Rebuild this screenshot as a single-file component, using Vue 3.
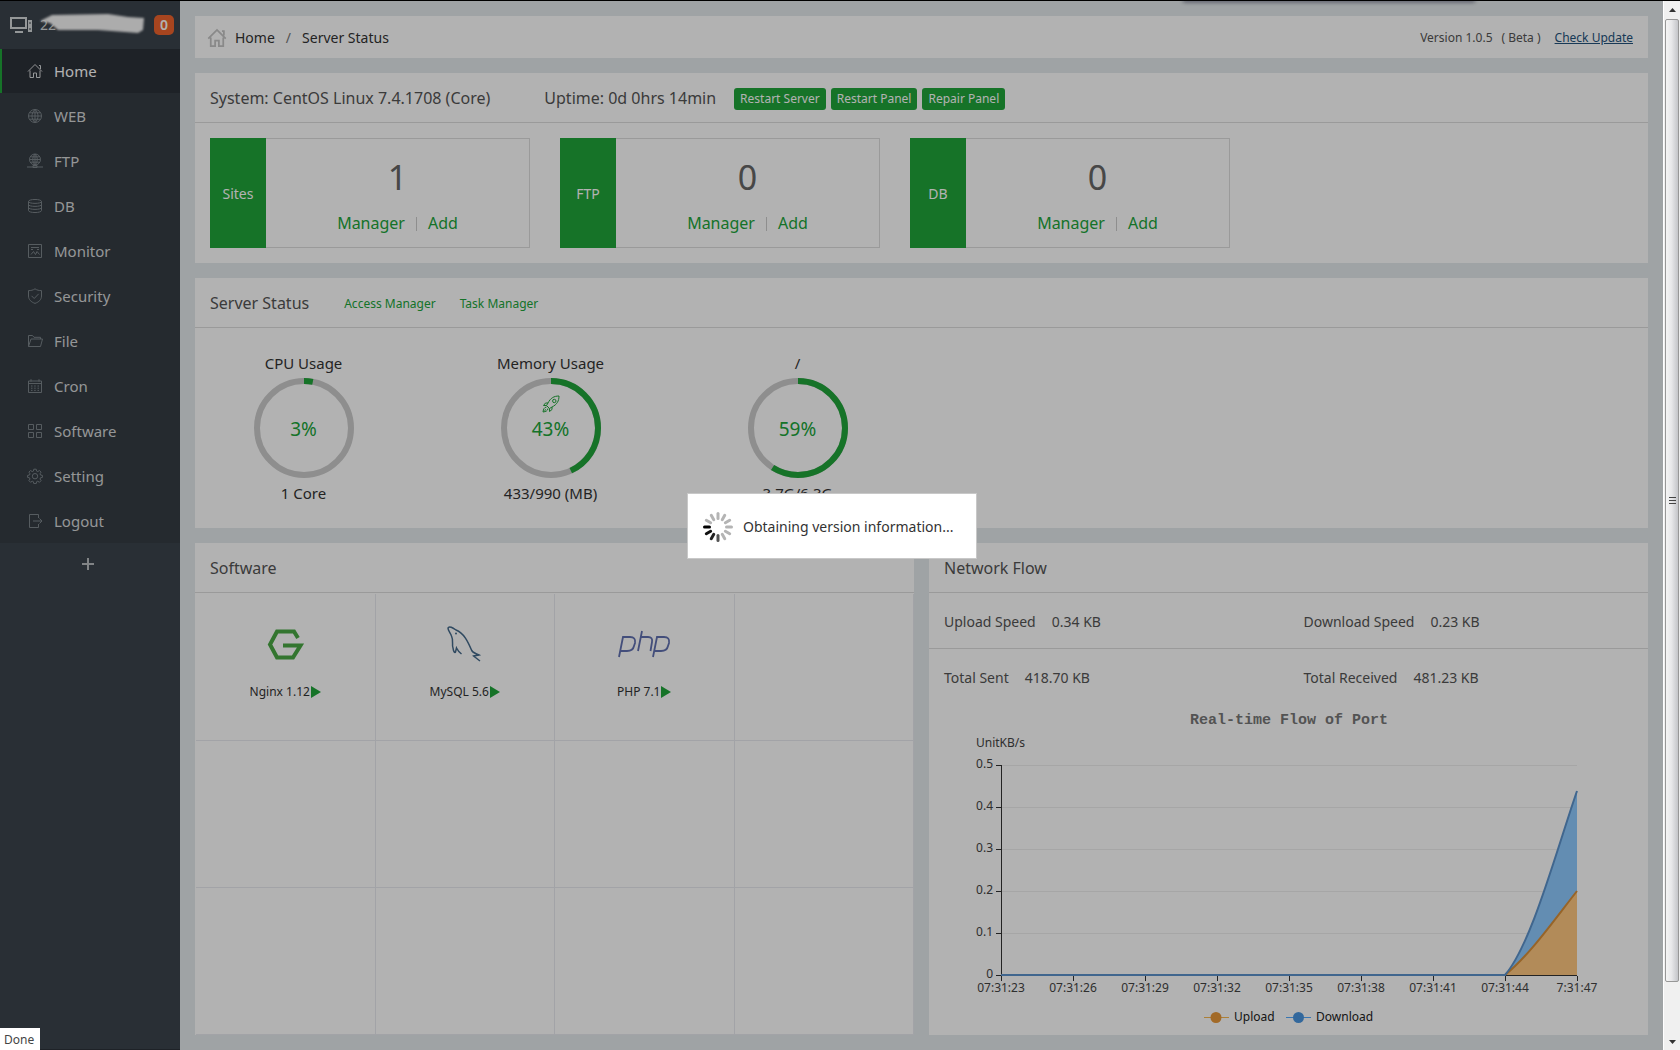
<script setup>
import { computed } from 'vue'

const menu = [
  { label: 'Home', icon: 'home', active: true },
  { label: 'WEB', icon: 'globe' },
  { label: 'FTP', icon: 'ftp' },
  { label: 'DB', icon: 'db' },
  { label: 'Monitor', icon: 'monitor' },
  { label: 'Security', icon: 'shield' },
  { label: 'File', icon: 'folder' },
  { label: 'Cron', icon: 'calendar' },
  { label: 'Software', icon: 'grid' },
  { label: 'Setting', icon: 'gear' },
  { label: 'Logout', icon: 'logout' },
]

const icons = {
  home: 'M1 8.5 8 1.5 15 8.5M12 2.5h1.5V6M3 7.5V14.500h3.500V10h3v4.500H13V7.500',
  globe: 'M8 1.500a6.500 6.500 0 1 0 0 13a6.500 6.500 0 1 0 0-13M8 1.500v13M1.500 8h13M2.500 4.800h11M2.500 11.200h11M8 1.500C4 5 4 11 8 14.500M8 1.500C12 5 12 11 8 14.500',
  ftp: 'M8 1a5.500 5.500 0 1 0 0 11a5.500 5.500 0 1 0 0-11M8 1v11M2.500 6.500h11M3.500 3.800h9M3.500 9.200h9M8 1C5 4 5 9 8 12M8 1C11 4 11 9 8 12M0 14h16M6 12.500h4v2H6z',
  db: 'M1.500 3.500C1.500 .8 14.500 .8 14.500 3.500C14.500 6 1.500 6 1.500 3.500V12.500C1.500 15.200 14.500 15.200 14.500 12.500V3.500M1.500 6.500C1.500 9 14.500 9 14.500 6.500M1.500 9.500C1.500 12 14.500 12 14.500 9.500',
  monitor: 'M1.500 1.500h13v13h-13zM4 4.500h8M4 6.500h2M10 6.500h2M4 11.500l2.500-3 2 3 1.500-3 2.500 3',
  shield: 'M8 .8C10 2.200 12 2.600 14.500 2.600V8C14.500 11.500 12 14 8 15.400C4 14 1.500 11.500 1.500 8V2.600C4 2.600 6 2.200 8 .8ZM4.500 7.800l2.700 2.700 4.500-4.700',
  folder: 'M1.500 13.500V2.500h4l1.500 1.800h6.500V6M1.500 13.500L4 6h11.500l-2 7.500z',
  calendar: 'M1.500 3h13v11.500h-13zM1.500 5.500h13M4 1.200v2.500M12 1.200v2.500M4 8h1.500M7.200 8h1.500M10.500 8H12M4 10.200h1.500M7.200 10.200h1.500M10.500 10.200H12M4 12.400h1.500M7.200 12.400h1.500M10.500 12.400H12',
  grid: 'M1.500 1.500h5v5h-5zM9.500 1.500h5v5h-5zM1.500 9.500h5v5h-5zM9.500 9.500h5v5h-5z',
  gear: 'M6.800 1.200h2.400l.4 1.900 1.200.5 1.600-1.100 1.700 1.700-1.100 1.600.5 1.200 1.900.4v2.000l-1.900.4-.5 1.200 1.100 1.600-1.700 1.700-1.600-1.100-1.200.5-.4 1.900H6.800l-.4-1.900-1.200-.5-1.600 1.100-1.700-1.700 1.100-1.600-.5-1.200-1.900-.4V7.400l1.900-.4.500-1.200-1.100-1.600 1.700-1.700 1.600 1.100 1.200-.5zM8 5.500a2.700 2.700 0 1 0 0 5.400a2.700 2.700 0 1 0 0-5.400',
  logout: 'M11.500 5V1.500h-9v13h9V11M6 8h9M12.500 5.500 15 8l-2.500 2.500',
}

const cards = [
  { name: 'Sites', count: 1 },
  { name: 'FTP', count: 0 },
  { name: 'DB', count: 0 },
]

const gauges = [
  { title: 'CPU Usage', percent: 3, note: '1 Core' },
  { title: 'Memory Usage', percent: 43, note: '433/990 (MB)', rocket: true },
  { title: '/', percent: 59, note: '3.7G/6.3G' },
]
const circumference = 2 * Math.PI * 47
const dash = (p) => `${(circumference * p) / 100} ${circumference}`

const software = [
  { name: 'Nginx 1.12', logo: 'nginx' },
  { name: 'MySQL 5.6', logo: 'mysql' },
  { name: 'PHP 7.1', logo: 'php' },
]
const cells = computed(() => Array.from({ length: 12 }, (_, i) => software[i] || null))

const flow = [
  [['Upload Speed', '0.34 KB'], ['Download Speed', '0.23 KB']],
  [['Total Sent', '418.70 KB'], ['Total Received', '481.23 KB']],
]

const yTicks = ['0.5', '0.4', '0.3', '0.2', '0.1', '0'].map((label, i) => ({ label, y: 65 + i * 42 }))
const xTicks = ['07:31:23', '07:31:26', '07:31:29', '07:31:32', '07:31:35', '07:31:38', '07:31:41', '07:31:44', '7:31:47']
  .map((label, i) => ({ label, x: 72 + i * 72 }))

const blades = Array.from({ length: 12 }, (_, i) => ({
  angle: i * 30,
  color: { 6: '#555', 7: '#222', 8: '#111', 9: '#000' }[i] || '#b4b4b4',
}))
</script>

<template>
  <div class="page">
    <aside class="sidebar">
      <div class="host">
        <svg class="host-icon" viewBox="0 0 22 16" aria-hidden="true">
          <path d="M1 1h15v10H1zM5 15h8" fill="none" stroke="#d4d8da" stroke-width="2" />
          <path d="M18 3h4v12h-4z" fill="#d4d8da" /><path d="M19 6h2M20 11v2" stroke="#3c444d" />
        </svg>
        <span class="host-name">22
          <svg class="smudge" viewBox="0 0 108 22" aria-hidden="true">
            <path d="M2 8 14 2 70 1 90 4 106 5 105 17 100 20 60 17 20 17 12 10Z" fill="#f6f6f6" />
          </svg>
        </span>
        <span class="badge">0</span>
      </div>
      <nav class="menu">
        <a v-for="m in menu" :key="m.label" href="#" class="menu-item" :class="{ active: m.active }">
          <svg class="menu-icon" viewBox="0 0 16 16" aria-hidden="true"><path :d="icons[m.icon]" /></svg>
          <span>{{ m.label }}</span>
        </a>
      </nav>
      <button class="add" type="button" aria-label="Add menu item">
        <svg viewBox="0 0 14 14" width="14" height="14"><path d="M7 1v12M1 7h12" stroke="#b9bdc0" stroke-width="2" /></svg>
      </button>
    </aside>

    <main class="main">
      <section class="panel crumbs">
        <svg class="crumb-icon" viewBox="0 0 16 16" aria-hidden="true"><path :d="icons.home" /></svg>
        <a href="#">Home</a><span class="slash">/</span><span>Server Status</span>
        <div class="version">
          <span>Version 1.0.5</span><span class="beta">( Beta )</span><a href="#" class="update">Check Update</a>
        </div>
      </section>

      <section class="panel">
        <header class="panel-head">
          <h2 class="system">System: CentOS Linux 7.4.1708 (Core)</h2>
          <h2 class="uptime">Uptime: 0d 0hrs 14min</h2>
          <div class="actions">
            <button type="button">Restart Server</button>
            <button type="button">Restart Panel</button>
            <button type="button">Repair Panel</button>
          </div>
        </header>
        <div class="cards">
          <article v-for="c in cards" :key="c.name" class="card">
            <div class="card-name">{{ c.name }}</div>
            <div class="card-body">
              <strong class="count">{{ c.count }}</strong>
              <div class="links"><a href="#">Manager</a><i></i><a href="#">Add</a></div>
            </div>
          </article>
        </div>
      </section>

      <section class="panel status">
        <header class="panel-head">
          <h2 class="status-title">Server Status</h2>
          <a href="#" class="head-link">Access Manager</a>
          <a href="#" class="head-link">Task Manager</a>
        </header>
        <div class="gauges">
          <div v-for="g in gauges" :key="g.title" class="gauge">
            <h3>{{ g.title }}</h3>
            <div class="ring">
              <svg viewBox="0 0 100 100" width="100" height="100" aria-hidden="true">
                <circle cx="50" cy="50" r="47" stroke="#ccc" />
                <circle cx="50" cy="50" r="47" stroke="#20a53a" :stroke-dasharray="dash(g.percent)" transform="rotate(-90 50 50)" />
              </svg>
              <svg v-if="g.rocket" class="rocket" viewBox="0 0 18 18" aria-hidden="true">
                <path d="M17 1C12 1 8.500 3 6 8L4.500 10.500 7.500 13.500 10 12C15 9.500 17 6 17 1ZM14 6a1.700 1.700 0 1 0-3.400 0a1.700 1.700 0 1 0 3.400 0M6 8H3.500L1.500 10.500 4.500 10.500M10 12v2.500L7.500 16.500V13.500M4.500 12C2 12.500 1.500 14 1 17C4 16.500 5.500 16 6 13.500M4 14.500l-1.500 1" />
              </svg>
              <span class="percent">{{ g.percent }}%</span>
            </div>
            <p>{{ g.note }}</p>
          </div>
        </div>
      </section>

      <div class="columns">
        <section class="panel column">
          <header class="panel-head"><h2>Software</h2></header>
          <div class="cells">
            <div v-for="(s, i) in cells" :key="i" class="cell">
              <template v-if="s">
                <svg v-if="s.logo === 'nginx'" class="logo" viewBox="0 0 54 40" aria-hidden="true">
                  <path d="M40 14 36 7.500H19L12 20.500 19 33.500H35L42.500 21.500H25" fill="none" stroke="#49a844" stroke-width="4" />
                </svg>
                <svg v-else-if="s.logo === 'mysql'" class="logo" viewBox="0 0 54 40" aria-hidden="true">
                  <path d="M42 37 35.500 32C36.500 31.500 39 31.500 41 31C37 29 34 28.500 33.500 26C30 18 26 9 18 6C15 4 11 1.500 10 4C10 7 12.500 9 13.500 12C16 17 13.500 21 15 24C15.500 28 17 29.500 17.500 28L18.500 24C20 27 21 28 23.500 30" fill="none" stroke="#456a8b" stroke-width="1.500" />
                  <circle cx="18" cy="9.500" r="1" fill="#456a8b" />
                </svg>
                <svg v-else class="logo" viewBox="0 0 54 40" aria-hidden="true">
                  <path d="M2 33 6 13H13Q19 13 18 19L17 22Q16 27 10 27H4M21 27 25 7M23.500 13H31Q36 13 35 18L33.500 27M36 33 40 13H47Q53 13 52 19L51 22Q50 27 44 27H38" fill="none" stroke="#6070b0" stroke-width="1.800" />
                </svg>
                <div class="soft-name">{{ s.name }}<i class="play"></i></div>
              </template>
            </div>
          </div>
        </section>

        <section class="panel column">
          <header class="panel-head"><h2>Network Flow</h2></header>
          <div v-for="(row, i) in flow" :key="i" class="flow-row">
            <div v-for="[k, v] in row" :key="k" class="flow-item"><span>{{ k }}</span><span>{{ v }}</span></div>
          </div>
          <svg class="chart" viewBox="0 4 719 331" role="img" aria-label="Real-time Flow of Port">
            <text class="chart-title" x="360" y="24" text-anchor="middle">Real-time Flow of Port</text>
            <text x="47" y="47">UnitKB/s</text>
            <g v-for="t in yTicks" :key="t.label">
              <path :d="`M73 ${t.y}.5H648`" stroke="#eee" />
              <path :d="`M67 ${t.y}.5H72`" stroke="#333" />
              <text x="64" :y="t.y + 3" text-anchor="end">{{ t.label }}</text>
            </g>
            <g v-for="t in xTicks" :key="t.label">
              <path :d="`M${t.x}.5 276v5`" stroke="#333" />
              <text :x="t.x" y="292" text-anchor="middle">{{ t.label }}</text>
            </g>
            <path d="M576 275C602 245 626 155 648 91V275Z" fill="#8ecaff" />
            <path d="M576 275C600 256 626 219 648 191V275Z" fill="#ffc880" />
            <path d="M72.500 65V275.500H648" fill="none" stroke="#333" />
            <path d="M72 275H576C600 256 626 219 648 191" fill="none" stroke="#d8903a" stroke-width="2" />
            <path d="M72 275H576C602 245 626 155 648 91" fill="none" stroke="#5c93cc" stroke-width="2" />
            <path d="M275 317.500h25" stroke="#f7b851" /><circle cx="287" cy="317.500" r="5.500" fill="#e8983a" />
            <text class="legend" x="305" y="321">Upload</text>
            <path d="M357 317.500h25" stroke="#52a9ff" /><circle cx="369.500" cy="317.500" r="5.500" fill="#4a96e0" />
            <text class="legend" x="387" y="321">Download</text>
          </svg>
        </section>
      </div>
    </main>

    <div class="shade"></div>
    <div class="scrollbar" aria-hidden="true">
      <svg width="17" height="18" viewBox="0 0 17 18"><path d="M5 11h7L8.500 7Z" fill="#333" /></svg>
      <div class="thumb"><i></i><i></i><i></i></div>
      <svg width="17" height="18" viewBox="0 0 17 18"><path d="M5 8h7L8.500 12Z" fill="#333" /></svg>
    </div>
    <div class="edge"></div>
    <div class="loading" role="status">
      <svg viewBox="0 0 32 32" width="32" height="32" aria-hidden="true">
        <path v-for="b in blades" :key="b.angle" d="M16 2.500v5" :stroke="b.color" stroke-width="3" stroke-linecap="round" :transform="`rotate(${b.angle} 16 16)`" />
      </svg>
      <span>Obtaining version information...</span>
    </div>
    <div class="done">Done</div>
  </div>
</template>

<style>
body { background: #e4eaec; }
</style>

<style scoped>
* { box-sizing: border-box; margin: 0; }
.page { display: flex; min-height: 100vh; border-top: 1px solid #000; background: #e4eaec; color: #333; font: 14px/20px "Noto Sans", "Open Sans", sans-serif; }
a { color: inherit; text-decoration: none; }
h2 { font-size: 16px; font-weight: 400; color: #555; }
button { font-family: inherit; border: 0; cursor: pointer; }

.sidebar { width: 180px; flex: none; background: #3c444d; border-bottom: 1px solid #2c3138; }
.host { display: flex; align-items: center; height: 48px; padding: 0 6px 0 10px; }
.host-icon { width: 22px; height: 16px; flex: none; }
.host-name { position: relative; flex: 1; padding-left: 8px; color: #d4d8da; font-size: 14px; }
.smudge { position: absolute; left: 6px; top: -2px; width: 108px; height: 22px; filter: blur(1px); }
.badge { width: 20px; height: 20px; border-radius: 5px; background: #f0642d; color: #fff; font-weight: 600; text-align: center; }
.menu { background: #353d44; }
.menu-item { display: flex; align-items: center; height: 45px; padding-left: 25px; border-left: 2px solid transparent; color: #d6d7d9; font-size: 15px; }
.menu-icon { width: 16px; height: 16px; margin-right: 11px; fill: none; stroke: #7c848a; }
.active { height: 44px; background: #2c3138; border-left-color: #20a53a; color: #fff; }
.active .menu-icon { stroke: #d5d8da; }
.add { display: flex; align-items: center; justify-content: center; width: 175px; height: 42px; background: none; }

.main { flex: 1; min-width: 0; display: flex; flex-direction: column; gap: 15px; padding: 15px; margin-right: 17px; }
.panel { background: #fff; }
.crumbs { display: flex; align-items: center; height: 42px; padding: 2px 15px 0 12px; }
.crumb-icon { width: 20px; height: 20px; margin-right: 8px; fill: none; stroke: #c4c4c4; stroke-width: 1.400; }
.slash { margin: 0 11px; color: #777; }
.version { display: flex; margin-left: auto; font-size: 12px; color: #555; }
.beta { margin: 0 14px 0 9px; }
.update { color: #23527c; text-decoration: underline; }

.panel-head { display: flex; align-items: center; height: 50px; padding: 0 15px; border-bottom: 1px solid #ddd; }
.uptime { margin-left: 54px; }
.actions { display: flex; gap: 5px; margin-left: 18px; padding-top: 2px; }
.actions button { height: 22px; padding: 0 6px; border-radius: 3px; background: #20a53a; color: #fff; font-size: 12px; }
.cards { display: flex; gap: 30px; padding: 15px; }
.card { display: flex; width: 320px; height: 110px; border: 1px solid #ddd; border-left: 0; }
.card-name { display: flex; align-items: center; justify-content: center; width: 56px; margin: -1px 0; padding-top: 2px; background: #20a53a; color: #fff; }
.card-body { flex: 1; text-align: center; color: #666; }
.count { display: block; padding-top: 18px; font-size: 34px; line-height: 40px; font-weight: 400; }
.links { display: flex; align-items: center; justify-content: center; padding-top: 16px; font-size: 16px; color: #20a53a; }
.links i { width: 1px; height: 14px; margin: 2px 11px 0; background: #ccc; }

.status-title { margin-right: 35px; }
.head-link { margin-right: 24px; padding-top: 2px; font-size: 12px; color: #20a53a; }
.gauges { display: flex; gap: 60px; height: 200px; padding: 23px 15px 0; }
.gauge { width: 187px; text-align: center; }
.gauge h3 { padding-bottom: 2px; font-size: 15px; line-height: 25px; font-weight: 400; }
.gauge p { font-size: 15px; line-height: 30px; }
.ring { position: relative; display: flex; align-items: center; justify-content: center; height: 100px; }
.ring circle { fill: none; stroke-width: 6; }
.rocket { position: absolute; top: 17px; width: 18px; height: 18px; fill: none; stroke: #20a53a; }
.percent { position: absolute; padding-top: 2px; font-size: 19px; color: #20a53a; line-height: 100px; }

.columns { display: grid; grid-template-columns: 1fr 1fr; gap: 15px; }
.column { min-width: 0; }
.cells { display: grid; grid-template-columns: repeat(4, 1fr); grid-auto-rows: 147px; padding: 1px 0 0 1px; }
.cell { display: flex; flex-direction: column; align-items: center; padding-top: 30px; border-right: 1px solid #e8eaf0; border-bottom: 1px solid #e8eaf0; }
.logo { width: 54px; height: 40px; }
.soft-name { display: flex; align-items: center; margin-top: 18px; font-size: 12px; }
.play { border: 6px solid transparent; border-left: 10px solid #20a53a; border-right: 0; margin-left: 1px; }
.flow-row { display: flex; height: 55px; align-items: center; color: #555; }
.flow-row + .flow-row { height: 56px; border-top: 1px solid #ddd; }
.flow-item { display: flex; gap: 16px; flex: 1; padding: 2px 0 0 15px; }
.chart { display: block; width: 100%; font-size: 12px; }
.chart text { fill: #444; }
.chart .legend { fill: #222; }
.chart .chart-title { font: bold 15px "Liberation Mono", monospace; fill: #777; }

.shade { position: fixed; inset: 1px 17px 0 0; background: rgba(0, 0, 0, .3); }
.edge { position: fixed; top: 0; left: 1184px; width: 290px; height: 1px; box-shadow: 0 0 4px 1px rgba(0, 0, 30, .6); }
.scrollbar { position: fixed; top: 1px; right: 0; bottom: 0; width: 17px; display: flex; flex-direction: column; background: #f0f0f0; border-left: 1px solid #fff; }
.thumb { flex: 1; display: flex; flex-direction: column; align-items: center; justify-content: center; gap: 2px; width: 14px; margin: 0 1px 50px; border: 1px solid #979797; border-radius: 2px; background: linear-gradient(90deg, #f5f5f5, #e8e8ea 45%, #c4c5c9); }
.thumb i { width: 7px; height: 1px; background: #444; }
.loading { position: fixed; top: 50%; left: 50%; transform: translate(-153px, -32px); display: flex; align-items: center; gap: 9px; width: 290px; height: 66px; padding: 1px 0 0 14px; background: #fff; border: 1px solid #c8c8c8; }
.done { position: fixed; left: 0; bottom: 0; width: 40px; height: 22px; padding-left: 4px; background: #fff; color: #444; font-size: 12px; line-height: 23px; }
</style>
